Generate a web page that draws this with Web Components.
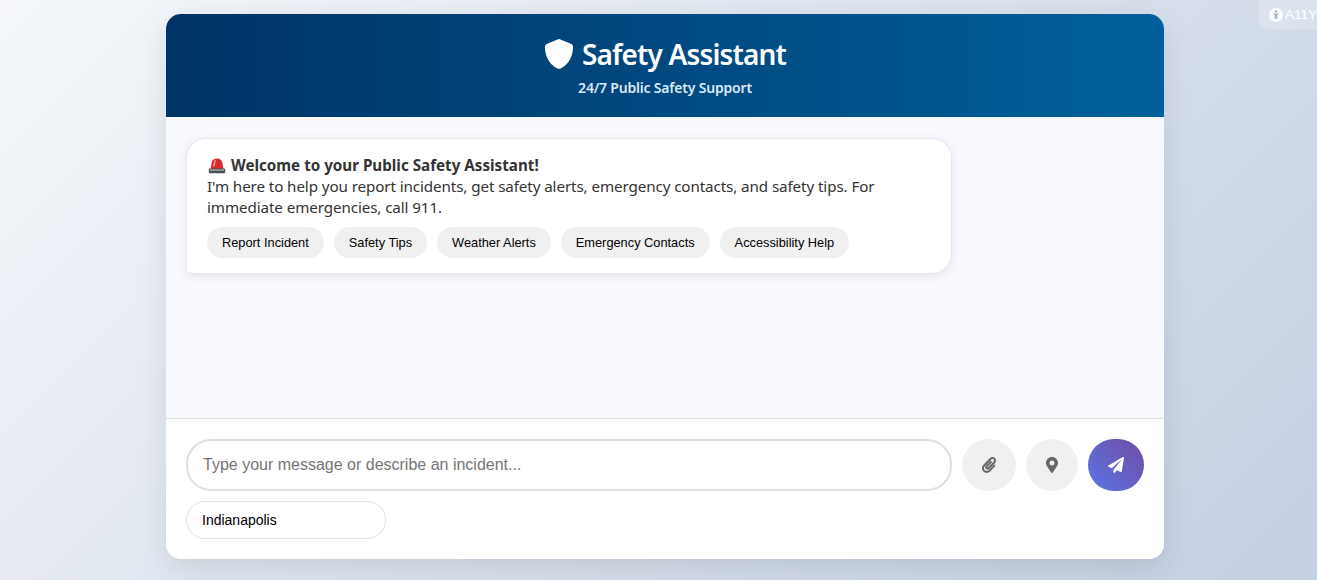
<!DOCTYPE html>
<html lang="en">
<head>
<meta charset="utf-8">
<title>Safety Assistant</title>
<style>
  html, body { margin: 0; height: 100%; }
  body {
    overflow: hidden;
    font-family: "Noto Sans", "Open Sans", sans-serif;
    color: #333;
    background: linear-gradient(135deg, #f5f7fa 0%, #c3cfe2 100%);
  }
</style>
</head>
<body>
<a11y-tab></a11y-tab>
<safety-chat>
  <chat-header slot="header" title="Safety Assistant" subtitle="24/7 Public Safety Support"></chat-header>
  <chat-bubble>
    <chat-chip>Report Incident</chat-chip>
    <chat-chip>Safety Tips</chat-chip>
    <chat-chip>Weather Alerts</chat-chip>
    <chat-chip>Emergency Contacts</chat-chip>
    <chat-chip>Accessibility Help</chat-chip>
  </chat-bubble>
  <chat-composer slot="footer"></chat-composer>
</safety-chat>

<script>
/* ---- icons (solid glyphs, fill follows currentColor) ---- */
const ICONS = {
  shield: ['0 0 512 512', 'M256 0c4.6 0 9.2 1 13.4 2.9L457.7 82.8c22 9.3 38.4 31 38.3 57.2c-.5 99.2-41.3 280.7-213.6 363.2c-16.7 8-36.1 8-52.8 0C57.3 420.7 16.5 239.2 16 140c-.1-26.2 16.3-47.9 38.3-57.2L242.7 2.9C246.8 1 251.4 0 256 0z'],
  clip: ['0 0 448 512', 'M43.246 466.142c-58.43-60.289-57.341-157.511 1.386-217.581L254.392 34c44.316-45.332 116.351-45.336 160.671 0 43.89 44.894 43.943 117.329 0 162.276L232.214 383.128c-29.855 30.537-78.633 30.111-107.982-.998-28.275-29.97-27.368-77.473 1.452-106.953l143.743-146.835c6.182-6.314 16.312-6.422 22.626-.241l22.861 22.379c6.315 6.182 6.422 16.312.241 22.626L171.427 319.927c-4.932 5.045-5.236 13.428-.648 18.292 4.372 4.634 11.245 4.711 15.688.165l182.849-186.851c19.613-20.062 19.613-52.725-.011-72.798-19.189-19.627-49.957-19.637-69.154 0L90.39 293.295c-34.763 35.56-35.299 93.12-1.191 128.313 34.01 35.093 88.985 35.137 123.058.286l172.06-175.999c6.177-6.319 16.307-6.433 22.626-.256l22.877 22.364c6.319 6.177 6.434 16.307.256 22.626l-172.06 175.998c-59.576 60.938-155.943 60.216-214.77-.485z'],
  marker: ['0 0 384 512', 'M172.268 501.67C26.97 291.031 0 268.413 0 192 0 85.961 85.961 0 192 0s192 85.961 192 192c0 76.413-26.97 99.031-172.268 309.67-9.535 13.774-29.93 13.773-39.464 0zM192 272c44.183 0 80-35.817 80-80s-35.817-80-80-80-80 35.817-80 80 35.817 80 80 80z'],
  plane: ['0 0 512 512', 'M476 3.2L12.5 270.6c-18.1 10.4-15.8 35.6 2.2 43.2L121 358.4l287.3-253.2c5.5-4.9 13.3 2.6 8.6 8.3L176 407v80.5c0 23.6 28.5 32.9 42.5 15.8L282 426l124.6 52.2c14.2 6 30.4-2.9 33-18.2l72-432C515 7.8 493.3-6.8 476 3.2z']
};
const icon = (name, h) => {
  const [box, d] = ICONS[name];
  return `<svg viewBox="${box}" height="${h}" fill="currentColor" aria-hidden="true"><path d="${d}"/></svg>`;
};

/* ---- page shell: the white card ---- */
class SafetyChat extends HTMLElement {
  constructor() {
    super();
    this.attachShadow({ mode: 'open' }).innerHTML = `
      <style>
        :host { display: block; padding: 14px 0 0 166px; }
        .card {
          width: 998px;
          height: 545px;
          display: flex;
          flex-direction: column;
          background: #fff;
          border-radius: 15px;
          overflow: hidden;
          box-shadow: 0 10px 30px rgba(0, 0, 0, 0.1);
        }
        .messages {
          flex: 1;
          padding: 21px 20px;
          background: #f8f9ff;
        }
      </style>
      <div class="card">
        <slot name="header"></slot>
        <div class="messages"><slot></slot></div>
        <slot name="footer"></slot>
      </div>`;
  }
}

class ChatHeader extends HTMLElement {
  constructor() {
    super();
    this.attachShadow({ mode: 'open' }).innerHTML = `
      <style>
        :host {
          display: block;
          height: 103px;
          box-sizing: border-box;
          padding-top: 20px;
          text-align: center;
          color: #fff;
          background: linear-gradient(90deg, #003366 0%, #00609b 100%);
        }
        h1 {
          margin: 0;
          display: flex;
          justify-content: center;
          align-items: center;
          gap: 8px;
          height: 40px;
          font-size: 28px;
          font-weight: 600;
          letter-spacing: -0.84px;
        }
        h1 svg { display: block; }
        p {
          margin: 4px 0 0;
          font-size: 14px;
          font-weight: 600;
          line-height: 19px;
          color: #dbe9f5;
          letter-spacing: -0.2px;
        }
      </style>
      <h1>${icon('shield', 30)}<span>${this.getAttribute('title')}</span></h1>
      <p>${this.getAttribute('subtitle')}</p>`;
  }
}

class ChatBubble extends HTMLElement {
  constructor() {
    super();
    this.attachShadow({ mode: 'open' }).innerHTML = `
      <style>
        :host {
          display: block;
          width: 766px;
          box-sizing: border-box;
          padding: 16px 20px 15px;
          background: #fff;
          border: 1px solid #e4e6ea;
          border-radius: 20px 20px 20px 5px;
          box-shadow: 0 2px 10px rgba(0, 0, 0, 0.08);
          font-size: 15.2px;
          line-height: 21px;
          color: #333;
        }
        .title { display: flex; align-items: center; gap: 5px; font-weight: 700; }
        .title svg { display: block; flex: none; margin-left: 1px; }
        .body { letter-spacing: -0.1px; }
        .chips { display: flex; gap: 10px; margin-top: 9px; }
      </style>
      <div class="title">
        <svg width="18" height="16" viewBox="0 0 18 16" aria-hidden="true">
          <path d="M2.6 11 L3.6 5 C4 2 6 .4 9 .4 C12 .4 14 2 14.4 5 L15.4 11 Z" fill="#d92b2b"/>
          <path d="M5.2 8.6 L5.8 4.6 C6.1 3 7 2 8.4 1.7 C7.4 3.4 7 6 6.8 8.6 Z" fill="#f79a9a"/>
          <rect x=".8" y="10.6" width="16.4" height="4.6" rx="1.2" fill="#4e5155"/>
          <rect x="2" y="11.4" width="14" height="1.3" fill="#b3b6ba"/>
        </svg>
        <span>Welcome to your Public Safety Assistant!</span>
      </div>
      <div class="body">I'm here to help you report incidents, get safety alerts, emergency contacts, and safety tips. For immediate emergencies, call 911.</div>
      <div class="chips"><slot></slot></div>`;
  }
}

class ChatChip extends HTMLElement {
  constructor() {
    super();
    this.attachShadow({ mode: 'open' }).innerHTML = `
      <style>
        :host {
          display: block;
          height: 31px;
          box-sizing: border-box;
          padding: 0 15px;
          border-radius: 16px;
          background: #f0f0f0;
          color: #000;
          font: 12.8px/31px "Liberation Sans", Arial, sans-serif;
          white-space: nowrap;
        }
      </style>
      <slot></slot>`;
  }
}

class ChatComposer extends HTMLElement {
  constructor() {
    super();
    this.attachShadow({ mode: 'open' }).innerHTML = `
      <style>
        :host {
          display: block;
          box-sizing: border-box;
          height: 141px;
          padding: 20px;
          background: #fff;
          border-top: 1px solid #e0e0e0;
        }
        .row { display: flex; gap: 10px; height: 52px; }
        input {
          box-sizing: border-box;
          margin: 0;
          font-family: "Liberation Sans", Arial, sans-serif;
          color: #000;
          outline: none;
        }
        .message {
          width: 766px;
          height: 52px;
          padding: 0 15px;
          border: 2px solid #e0e0e0;
          border-radius: 25px;
          font-size: 16px;
        }
        .message::placeholder { color: #757575; opacity: 1; }
        .location {
          display: block;
          width: 200px;
          height: 38px;
          margin-top: 10px;
          padding: 0 15px;
          border: 1px solid #e0e0e0;
          border-radius: 20px;
          font-size: 14px;
        }
        button {
          display: flex;
          align-items: center;
          justify-content: center;
          height: 52px;
          padding: 0;
          border: 0;
          border-radius: 26px;
          background: #f0f0f0;
          color: #666;
        }
        .attach { width: 54px; }
        .pin { width: 52px; }
        .send {
          width: 56px;
          color: #fff;
          background: linear-gradient(45deg, #5b74e6 0%, #6f4da3 100%);
        }
      </style>
      <div class="row">
        <input class="message" type="text" placeholder="Type your message or describe an incident...">
        <button class="attach" aria-label="Attach file">${icon('clip', 16)}</button>
        <button class="pin" aria-label="Share location">${icon('marker', 16)}</button>
        <button class="send" aria-label="Send">${icon('plane', 16)}</button>
      </div>
      <input class="location" type="text" value="Indianapolis">`;
  }
}

/* ---- accessibility tab, half off the top right corner ---- */
class A11yTab extends HTMLElement {
  constructor() {
    super();
    this.attachShadow({ mode: 'open' }).innerHTML = `
      <style>
        :host {
          position: fixed;
          top: -6px;
          left: 1258px;
          width: 80px;
          height: 35px;
          box-sizing: border-box;
          display: flex;
          align-items: center;
          gap: 2px;
          padding: 6px 0 0 11px;
          border-radius: 12px;
          background: rgba(255, 255, 255, 0.2);
          color: rgba(255, 255, 255, 0.88);
          font: 13.5px "Liberation Sans", Arial, sans-serif;
          -webkit-text-stroke: 0.2px currentColor;
        }
        svg { display: block; flex: none; }
      </style>
      <svg width="14" height="14" viewBox="0 0 14 14" aria-hidden="true">
        <circle cx="7" cy="7" r="7" fill="currentColor"/>
        <circle cx="7" cy="3.6" r="1.2" fill="#aab3c4"/>
        <path d="M3.4 5.4 L10.6 5.4 L8.3 6.9 L8.6 11 L7.4 11 L7 8.6 L6.6 11 L5.4 11 L5.7 6.9 Z" fill="#aab3c4"/>
      </svg>
      <span>A11Y</span>`;
  }
}

customElements.define('safety-chat', SafetyChat);
customElements.define('chat-header', ChatHeader);
customElements.define('chat-bubble', ChatBubble);
customElements.define('chat-chip', ChatChip);
customElements.define('chat-composer', ChatComposer);
customElements.define('a11y-tab', A11yTab);
</script>
</body>
</html>
